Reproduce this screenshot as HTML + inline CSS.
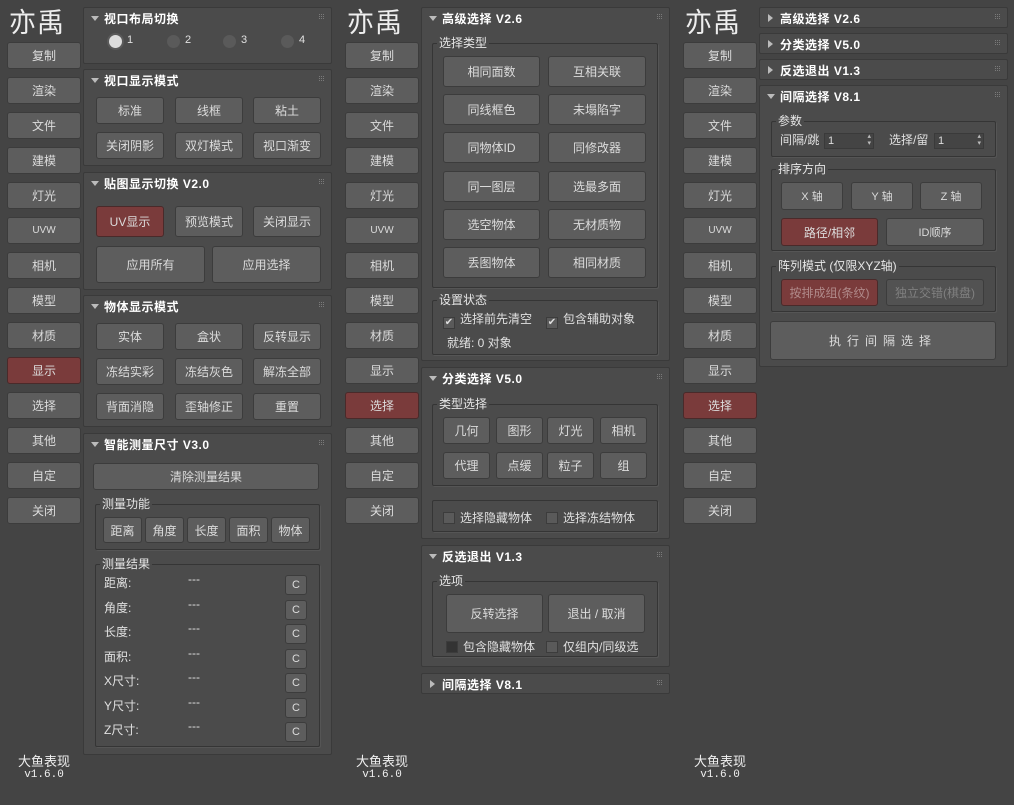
<!DOCTYPE html>
<html><head><meta charset="utf-8"><style>
*{margin:0;padding:0;box-sizing:border-box}
body{width:1014px;height:805px;background:#444;position:relative;overflow:hidden;font-family:"Liberation Sans","Noto Sans CJK SC",sans-serif;font-size:12px;color:#ddd}
.col{position:absolute;top:0;width:338px;height:805px}
.b{position:absolute;background:#5d5d5d;border:1px solid #3c3c3c;border-radius:3px;display:flex;align-items:center;justify-content:center;color:#dcdcdc;font-size:12px;white-space:nowrap}
.r{background:#7a3b3b;border-color:#4a2a2a}
.p{position:absolute;left:83px;width:249px;background:#4b4b4b;border:1px solid #3a3a3a;border-radius:2px}
.t{position:absolute;left:20px;top:2px;font-weight:bold;color:#fff;font-size:12px;letter-spacing:.5px}
.tri{position:absolute;left:7px;top:8px;width:0;height:0;border-left:4px solid transparent;border-right:4px solid transparent;border-top:5px solid #bbb}
.tri.c{left:8px;top:6px;border-top:4px solid transparent;border-bottom:4px solid transparent;border-left:5px solid #bbb;border-right:none}
.gr{position:absolute;right:6px;top:6px;width:6px;height:6px;background:
linear-gradient(#4b4b4b 0 0) 1px 0/1px 6px no-repeat,
linear-gradient(#4b4b4b 0 0) 3px 0/1px 6px no-repeat,
linear-gradient(#4b4b4b 0 0) 5px 0/1px 6px no-repeat,
linear-gradient(#4b4b4b 0 0) 0 1px/6px 1px no-repeat,
linear-gradient(#4b4b4b 0 0) 0 3px/6px 1px no-repeat,
linear-gradient(#4b4b4b 0 0) 0 5px/6px 1px no-repeat,#7a7a7a}
.g{position:absolute;border:1px solid #353535;border-radius:2px;box-shadow:1px 1px 0 #555}
.gl{position:absolute;left:4px;top:-9px;background:#4b4b4b;padding:0 2px;font-size:12px;color:#e6e6e6;line-height:16px}
.tx{position:absolute;white-space:nowrap;color:#e0e0e0}
.cb{display:inline-block;width:12px;height:12px;background:#5a5a5a;border:1px solid #3c3c3c;vertical-align:-2px;margin-right:5px;font-size:10px;line-height:10px;text-align:center;color:#ddd}
.rad{position:absolute;width:13px;height:13px;border-radius:50%;background:#5a5a5a}
.logo{position:absolute;left:9px;top:6px;font-size:27px;font-weight:normal;color:#eee;letter-spacing:1px;line-height:30px;font-family:"Noto Sans CJK SC",sans-serif}
.foot{position:absolute;left:0;width:88px;text-align:center;color:#f0f0f0}
.sp{position:absolute;height:16px;background:#444;border:1px solid #3a3a3a;font-size:11px;padding-left:3px;line-height:14px}
.sp:after{content:"▴\A▾";white-space:pre;position:absolute;right:2px;top:-1px;font-size:7px;line-height:7px;color:#bbb}
.sb{position:absolute;width:22px;height:20px;font-size:11px}
</style></head><body>

<!-- ============ COLUMN 1 ============ -->
<div class="col" style="left:0">
<div class="logo">亦禹</div>
<div class="b" style="left:7px;top:42px;width:74px;height:27px">复制</div>
<div class="b" style="left:7px;top:77px;width:74px;height:27px">渲染</div>
<div class="b" style="left:7px;top:112px;width:74px;height:27px">文件</div>
<div class="b" style="left:7px;top:147px;width:74px;height:27px">建模</div>
<div class="b" style="left:7px;top:182px;width:74px;height:27px">灯光</div>
<div class="b" style="left:7px;top:217px;width:74px;height:27px;font-size:10px">UVW</div>
<div class="b" style="left:7px;top:252px;width:74px;height:27px">相机</div>
<div class="b" style="left:7px;top:287px;width:74px;height:27px">模型</div>
<div class="b" style="left:7px;top:322px;width:74px;height:27px">材质</div>
<div class="b r" style="left:7px;top:357px;width:74px;height:27px">显示</div>
<div class="b" style="left:7px;top:392px;width:74px;height:27px">选择</div>
<div class="b" style="left:7px;top:427px;width:74px;height:27px">其他</div>
<div class="b" style="left:7px;top:462px;width:74px;height:27px">自定</div>
<div class="b" style="left:7px;top:497px;width:74px;height:27px">关闭</div>
<div class="foot" style="top:751px;font-size:13px">大鱼表现</div>
<div class="foot" style="top:769px;font-size:11px;font-family:'Liberation Mono',monospace">v1.6.0</div>

<div class="p" style="top:7px;height:57px"><div class="tri"></div><div class="t">视口布局切换</div><div class="gr"></div>
<div class="rad" style="left:25px;top:27px;background:#ddd;box-shadow:0 0 0 2px #5a5a5a"></div><div class="tx" style="left:43px;top:26px;font-size:11px">1</div>
<div class="rad" style="left:83px;top:27px"></div><div class="tx" style="left:101px;top:26px;font-size:11px">2</div>
<div class="rad" style="left:139px;top:27px"></div><div class="tx" style="left:157px;top:26px;font-size:11px">3</div>
<div class="rad" style="left:197px;top:27px"></div><div class="tx" style="left:215px;top:26px;font-size:11px">4</div>
</div>

<div class="p" style="top:69px;height:97px"><div class="tri"></div><div class="t">视口显示模式</div><div class="gr"></div></div>
<div class="b" style="left:96px;top:97px;width:68px;height:27px">标准</div>
<div class="b" style="left:175px;top:97px;width:68px;height:27px">线框</div>
<div class="b" style="left:253px;top:97px;width:68px;height:27px">粘土</div>
<div class="b" style="left:96px;top:132px;width:68px;height:27px">关闭阴影</div>
<div class="b" style="left:175px;top:132px;width:68px;height:27px">双灯模式</div>
<div class="b" style="left:253px;top:132px;width:68px;height:27px">视口渐变</div>

<div class="p" style="top:172px;height:118px"><div class="tri"></div><div class="t">贴图显示切换 V2.0</div><div class="gr"></div></div>
<div class="b r" style="left:96px;top:206px;width:68px;height:31px">UV显示</div>
<div class="b" style="left:175px;top:206px;width:68px;height:31px">预览模式</div>
<div class="b" style="left:253px;top:206px;width:68px;height:31px">关闭显示</div>
<div class="b" style="left:96px;top:246px;width:109px;height:37px">应用所有</div>
<div class="b" style="left:212px;top:246px;width:109px;height:37px">应用选择</div>

<div class="p" style="top:295px;height:132px"><div class="tri"></div><div class="t">物体显示模式</div><div class="gr"></div></div>
<div class="b" style="left:96px;top:323px;width:68px;height:27px">实体</div>
<div class="b" style="left:175px;top:323px;width:68px;height:27px">盒状</div>
<div class="b" style="left:253px;top:323px;width:68px;height:27px">反转显示</div>
<div class="b" style="left:96px;top:358px;width:68px;height:27px">冻结实彩</div>
<div class="b" style="left:175px;top:358px;width:68px;height:27px">冻结灰色</div>
<div class="b" style="left:253px;top:358px;width:68px;height:27px">解冻全部</div>
<div class="b" style="left:96px;top:393px;width:68px;height:27px">背面消隐</div>
<div class="b" style="left:175px;top:393px;width:68px;height:27px">歪轴修正</div>
<div class="b" style="left:253px;top:393px;width:68px;height:27px">重置</div>

<div class="p" style="top:433px;height:322px"><div class="tri"></div><div class="t">智能测量尺寸 V3.0</div><div class="gr"></div></div>
<div class="b" style="left:93px;top:463px;width:226px;height:27px">清除测量结果</div>
<div class="g" style="left:95px;top:504px;width:225px;height:46px"><div class="gl">测量功能</div></div>
<div class="b" style="left:103px;top:517px;width:39px;height:26px">距离</div>
<div class="b" style="left:145px;top:517px;width:39px;height:26px">角度</div>
<div class="b" style="left:187px;top:517px;width:39px;height:26px">长度</div>
<div class="b" style="left:229px;top:517px;width:39px;height:26px">面积</div>
<div class="b" style="left:271px;top:517px;width:39px;height:26px">物体</div>
<div class="g" style="left:95px;top:564px;width:225px;height:183px"><div class="gl">测量结果</div></div>
<div class="tx" style="left:104px;top:574px">距离:</div><div class="tx" style="left:188px;top:572px">---</div><div class="b sb" style="left:285px;top:575px">C</div>
<div class="tx" style="left:104px;top:599px">角度:</div><div class="tx" style="left:188px;top:597px">---</div><div class="b sb" style="left:285px;top:600px">C</div>
<div class="tx" style="left:104px;top:623px">长度:</div><div class="tx" style="left:188px;top:621px">---</div><div class="b sb" style="left:285px;top:624px">C</div>
<div class="tx" style="left:104px;top:648px">面积:</div><div class="tx" style="left:188px;top:646px">---</div><div class="b sb" style="left:285px;top:649px">C</div>
<div class="tx" style="left:104px;top:672px">X尺寸:</div><div class="tx" style="left:188px;top:670px">---</div><div class="b sb" style="left:285px;top:673px">C</div>
<div class="tx" style="left:104px;top:697px">Y尺寸:</div><div class="tx" style="left:188px;top:695px">---</div><div class="b sb" style="left:285px;top:698px">C</div>
<div class="tx" style="left:104px;top:721px">Z尺寸:</div><div class="tx" style="left:188px;top:719px">---</div><div class="b sb" style="left:285px;top:722px">C</div>
</div>

<!-- ============ COLUMN 2 ============ -->
<div class="col" style="left:338px">
<div class="logo">亦禹</div>
<div class="b" style="left:7px;top:42px;width:74px;height:27px">复制</div>
<div class="b" style="left:7px;top:77px;width:74px;height:27px">渲染</div>
<div class="b" style="left:7px;top:112px;width:74px;height:27px">文件</div>
<div class="b" style="left:7px;top:147px;width:74px;height:27px">建模</div>
<div class="b" style="left:7px;top:182px;width:74px;height:27px">灯光</div>
<div class="b" style="left:7px;top:217px;width:74px;height:27px;font-size:10px">UVW</div>
<div class="b" style="left:7px;top:252px;width:74px;height:27px">相机</div>
<div class="b" style="left:7px;top:287px;width:74px;height:27px">模型</div>
<div class="b" style="left:7px;top:322px;width:74px;height:27px">材质</div>
<div class="b" style="left:7px;top:357px;width:74px;height:27px">显示</div>
<div class="b r" style="left:7px;top:392px;width:74px;height:27px">选择</div>
<div class="b" style="left:7px;top:427px;width:74px;height:27px">其他</div>
<div class="b" style="left:7px;top:462px;width:74px;height:27px">自定</div>
<div class="b" style="left:7px;top:497px;width:74px;height:27px">关闭</div>
<div class="foot" style="top:751px;font-size:13px">大鱼表现</div>
<div class="foot" style="top:769px;font-size:11px;font-family:'Liberation Mono',monospace">v1.6.0</div>

<div class="p" style="top:7px;height:354px"><div class="tri"></div><div class="t">高级选择 V2.6</div><div class="gr"></div></div>
<div class="g" style="left:94px;top:43px;width:226px;height:245px"><div class="gl">选择类型</div></div>
<div class="b" style="left:105px;top:56px;width:97px;height:31px">相同面数</div>
<div class="b" style="left:210px;top:56px;width:98px;height:31px">互相关联</div>
<div class="b" style="left:105px;top:94px;width:97px;height:31px">同线框色</div>
<div class="b" style="left:210px;top:94px;width:98px;height:31px">未塌陷字</div>
<div class="b" style="left:105px;top:132px;width:97px;height:31px">同物体ID</div>
<div class="b" style="left:210px;top:132px;width:98px;height:31px">同修改器</div>
<div class="b" style="left:105px;top:171px;width:97px;height:31px">同一图层</div>
<div class="b" style="left:210px;top:171px;width:98px;height:31px">选最多面</div>
<div class="b" style="left:105px;top:209px;width:97px;height:31px">选空物体</div>
<div class="b" style="left:210px;top:209px;width:98px;height:31px">无材质物</div>
<div class="b" style="left:105px;top:247px;width:97px;height:31px">丢图物体</div>
<div class="b" style="left:210px;top:247px;width:98px;height:31px">相同材质</div>
<div class="g" style="left:94px;top:300px;width:226px;height:55px"><div class="gl">设置状态</div></div>
<div class="tx" style="left:105px;top:310px"><span class="cb">✔</span>选择前先清空</div>
<div class="tx" style="left:208px;top:310px"><span class="cb">✔</span>包含辅助对象</div>
<div class="tx" style="left:109px;top:334px">就绪: 0 对象</div>

<div class="p" style="top:367px;height:172px"><div class="tri"></div><div class="t">分类选择 V5.0</div><div class="gr"></div></div>
<div class="g" style="left:94px;top:404px;width:226px;height:82px"><div class="gl">类型选择</div></div>
<div class="b" style="left:105px;top:417px;width:47px;height:27px">几何</div>
<div class="b" style="left:158px;top:417px;width:47px;height:27px">图形</div>
<div class="b" style="left:209px;top:417px;width:47px;height:27px">灯光</div>
<div class="b" style="left:262px;top:417px;width:47px;height:27px">相机</div>
<div class="b" style="left:105px;top:452px;width:47px;height:27px">代理</div>
<div class="b" style="left:158px;top:452px;width:47px;height:27px">点缓</div>
<div class="b" style="left:209px;top:452px;width:47px;height:27px">粒子</div>
<div class="b" style="left:262px;top:452px;width:47px;height:27px">组</div>
<div class="g" style="left:94px;top:500px;width:226px;height:32px"></div>
<div class="tx" style="left:105px;top:509px"><span class="cb"></span>选择隐藏物体</div>
<div class="tx" style="left:208px;top:509px"><span class="cb"></span>选择冻结物体</div>

<div class="p" style="top:545px;height:122px"><div class="tri"></div><div class="t">反选退出 V1.3</div><div class="gr"></div></div>
<div class="g" style="left:94px;top:581px;width:226px;height:76px"><div class="gl">选项</div></div>
<div class="b" style="left:108px;top:594px;width:97px;height:39px">反转选择</div>
<div class="b" style="left:210px;top:594px;width:97px;height:39px">退出 / 取消</div>
<div class="tx" style="left:108px;top:638px"><span class="cb" style="background:#333"></span>包含隐藏物体</div>
<div class="tx" style="left:208px;top:638px"><span class="cb"></span>仅组内/同级选</div>

<div class="p" style="top:673px;height:21px"><div class="tri c"></div><div class="t">间隔选择 V8.1</div><div class="gr"></div></div>
</div>

<!-- ============ COLUMN 3 ============ -->
<div class="col" style="left:676px">
<div class="logo">亦禹</div>
<div class="b" style="left:7px;top:42px;width:74px;height:27px">复制</div>
<div class="b" style="left:7px;top:77px;width:74px;height:27px">渲染</div>
<div class="b" style="left:7px;top:112px;width:74px;height:27px">文件</div>
<div class="b" style="left:7px;top:147px;width:74px;height:27px">建模</div>
<div class="b" style="left:7px;top:182px;width:74px;height:27px">灯光</div>
<div class="b" style="left:7px;top:217px;width:74px;height:27px;font-size:10px">UVW</div>
<div class="b" style="left:7px;top:252px;width:74px;height:27px">相机</div>
<div class="b" style="left:7px;top:287px;width:74px;height:27px">模型</div>
<div class="b" style="left:7px;top:322px;width:74px;height:27px">材质</div>
<div class="b" style="left:7px;top:357px;width:74px;height:27px">显示</div>
<div class="b r" style="left:7px;top:392px;width:74px;height:27px">选择</div>
<div class="b" style="left:7px;top:427px;width:74px;height:27px">其他</div>
<div class="b" style="left:7px;top:462px;width:74px;height:27px">自定</div>
<div class="b" style="left:7px;top:497px;width:74px;height:27px">关闭</div>
<div class="foot" style="top:751px;font-size:13px">大鱼表现</div>
<div class="foot" style="top:769px;font-size:11px;font-family:'Liberation Mono',monospace">v1.6.0</div>

<div class="p" style="top:7px;height:21px"><div class="tri c"></div><div class="t">高级选择 V2.6</div><div class="gr"></div></div>
<div class="p" style="top:33px;height:21px"><div class="tri c"></div><div class="t">分类选择 V5.0</div><div class="gr"></div></div>
<div class="p" style="top:59px;height:21px"><div class="tri c"></div><div class="t">反选退出 V1.3</div><div class="gr"></div></div>
<div class="p" style="top:85px;height:282px"><div class="tri"></div><div class="t">间隔选择 V8.1</div><div class="gr"></div></div>
<div class="g" style="left:95px;top:121px;width:225px;height:36px"><div class="gl">参数</div></div>
<div class="tx" style="left:104px;top:131px">间隔/跳</div><div class="sp" style="left:148px;top:133px;width:50px">1</div>
<div class="tx" style="left:213px;top:131px">选择/留</div><div class="sp" style="left:258px;top:133px;width:50px">1</div>
<div class="g" style="left:95px;top:169px;width:225px;height:82px"><div class="gl">排序方向</div></div>
<div class="b" style="left:105px;top:182px;width:62px;height:28px;font-size:11px">X 轴</div>
<div class="b" style="left:175px;top:182px;width:62px;height:28px;font-size:11px">Y 轴</div>
<div class="b" style="left:244px;top:182px;width:62px;height:28px;font-size:11px">Z 轴</div>
<div class="b r" style="left:105px;top:218px;width:97px;height:28px">路径/相邻</div>
<div class="b" style="left:210px;top:218px;width:98px;height:28px;font-size:11px">ID顺序</div>
<div class="g" style="left:95px;top:266px;width:225px;height:46px"><div class="gl">阵列模式 (仅限XYZ轴)</div></div>
<div class="b r" style="left:105px;top:279px;width:97px;height:27px;color:#b08a8a">按排成组(条纹)</div>
<div class="b" style="left:210px;top:279px;width:98px;height:27px;background:#525252;color:#808080">独立交错(棋盘)</div>
<div class="b" style="left:94px;top:321px;width:226px;height:39px;letter-spacing:6px">执行间隔选择</div>
</div>
</body></html>
